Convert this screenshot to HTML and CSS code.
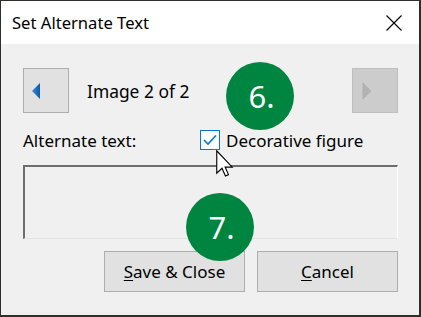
FILE: index.html
```html
<!DOCTYPE html>
<html lang="en">
<head>
  <meta charset="UTF-8" />
  <title>Set Alternate Text</title>
  <link rel="stylesheet" href="styles.css">
</head>
<body>
  <div class="window">
    <div class="titlebar">
      <span class="title">Set Alternate Text</span>
      <svg class="close" width="16" height="16" viewBox="0 0 16 16">
        <path d="M0.5 0.5 L15.5 15.5 M15.5 0.5 L0.5 15.5" stroke="#000" stroke-width="1.1" fill="none"/>
      </svg>
    </div>

    <div class="content">
      <div class="nav-row">
        <button class="nav-btn">
          <svg width="10" height="18" viewBox="0 0 10 18">
            <defs>
              <linearGradient id="blueg" x1="0" y1="0" x2="1" y2="0">
                <stop offset="0" stop-color="#3a8ad6"/>
                <stop offset="1" stop-color="#0d5aa7"/>
              </linearGradient>
            </defs>
            <polygon points="9,1 1,9 9,17" fill="url(#blueg)"/>
          </svg>
        </button>
        <span class="counter">Image 2 of 2</span>
        <button class="nav-btn disabled">
          <svg width="10" height="18" viewBox="0 0 10 18">
            <polygon points="1,1 9,9 1,17" fill="#b3b3b3" stroke="#a9a9a9" stroke-width="0.6"/>
          </svg>
        </button>
      </div>

      <div class="label-row">
        <span class="label">Alternate text:</span>
        <label class="check">
          <span class="box">
            <svg width="14" height="12" viewBox="0 0 14 12">
              <polyline points="1,6 5,10 13,1.5" fill="none" stroke="#0078d7" stroke-width="1.6"/>
            </svg>
          </span>
          <span>Decorative figure</span>
        </label>
      </div>

      <div class="textbox"></div>

      <div class="actions">
        <button class="btn"><u>S</u>ave &amp; Close</button>
        <button class="btn"><u>C</u>ancel</button>
      </div>
    </div>

    <div class="step step-6">6.</div>
    <div class="step step-7">7.</div>

    <svg class="cursor" width="18" height="27" viewBox="0 0 12 18">
      <path d="M0.5 0.5 L0.5 15.5 L4 12.2 L6.3 17.3 L8.3 16.4 L6.1 11.4 L10.8 11.4 Z" fill="#fff" stroke="#000" stroke-width="0.75" stroke-linejoin="miter"/>
    </svg>
  </div>
</body>
</html>
```

FILE: styles.css
```css
* {
  box-sizing: border-box;
  margin: 0;
  padding: 0;
}
html, body {
  width: 100%;
  height: 100%;
}
body {
  font-family: 'Noto Sans', 'Open Sans', sans-serif;
  background: #2b302b;
}
.window {
  position: relative;
  width: 421px;
  height: 317px;
  border: 1px solid #2b302b;
  border-right-width: 2px;
  border-bottom-width: 2px;
  background: #f0f0f0;
  overflow: hidden;
}
.titlebar {
  height: 43px;
  background: #fff;
  display: flex;
  align-items: center;
  justify-content: space-between;
  padding: 0 17px 0 11px;
}
.title {
  font-size: 16.6px;
  color: #000;
}
.close {
  display: block;
}
.content {
  padding: 24px 21px 0 22px;
  color: #000;
  font-size: 17px;
}
.nav-row {
  display: flex;
  align-items: center;
  height: 45px;
}
.nav-btn {
  width: 46px;
  height: 45px;
  border: 1px solid #adadad;
  background: #e1e1e1;
  display: flex;
  align-items: center;
  padding-left: 7px;
}
.nav-btn.disabled {
  background: #cccccc;
  border-color: #bfbfbf;
  margin-left: auto;
  padding-left: 9px;
}
.counter {
  margin-left: 18px;
  font-size: 17.4px;
}
.label-row {
  display: flex;
  align-items: center;
  height: 20px;
  margin-top: 17px;
}
.label {
  width: 177px;
}
.check {
  display: flex;
  align-items: center;
}
.box {
  width: 20px;
  height: 20px;
  border: 1px solid #0078d7;
  background: #fff;
  display: flex;
  align-items: center;
  justify-content: center;
  margin-right: 6px;
}
.textbox {
  margin-top: 15px;
  height: 74px;
  border-style: solid;
  border-width: 2px 1px 1px 2px;
  border-color: #6d6d6d #ffffff #e3e3e3 #6d6d6d;
  background: #f0f0f0;
}
.actions {
  display: flex;
  justify-content: flex-end;
  gap: 12px;
  margin-top: 12px;
}
.btn {
  width: 141px;
  height: 41px;
  border: 1px solid #adadad;
  background: #e1e1e1;
  font-family: 'Noto Sans', 'Open Sans', sans-serif;
  font-size: 17px;
  color: #000;
}
.btn u {
  text-decoration-thickness: 1px;
  text-underline-offset: 2px;
}
.step {
  position: absolute;
  width: 68px;
  height: 68px;
  border-radius: 50%;
  background: #008540;
  color: #fff;
  font-size: 31px;
  display: flex;
  align-items: center;
  justify-content: center;
  padding-left: 3px;
}
.step-6 {
  left: 225px;
  top: 61px;
}
.step-7 {
  left: 185px;
  top: 192px;
}
.cursor {
  position: absolute;
  left: 215px;
  top: 149px;
}
```
